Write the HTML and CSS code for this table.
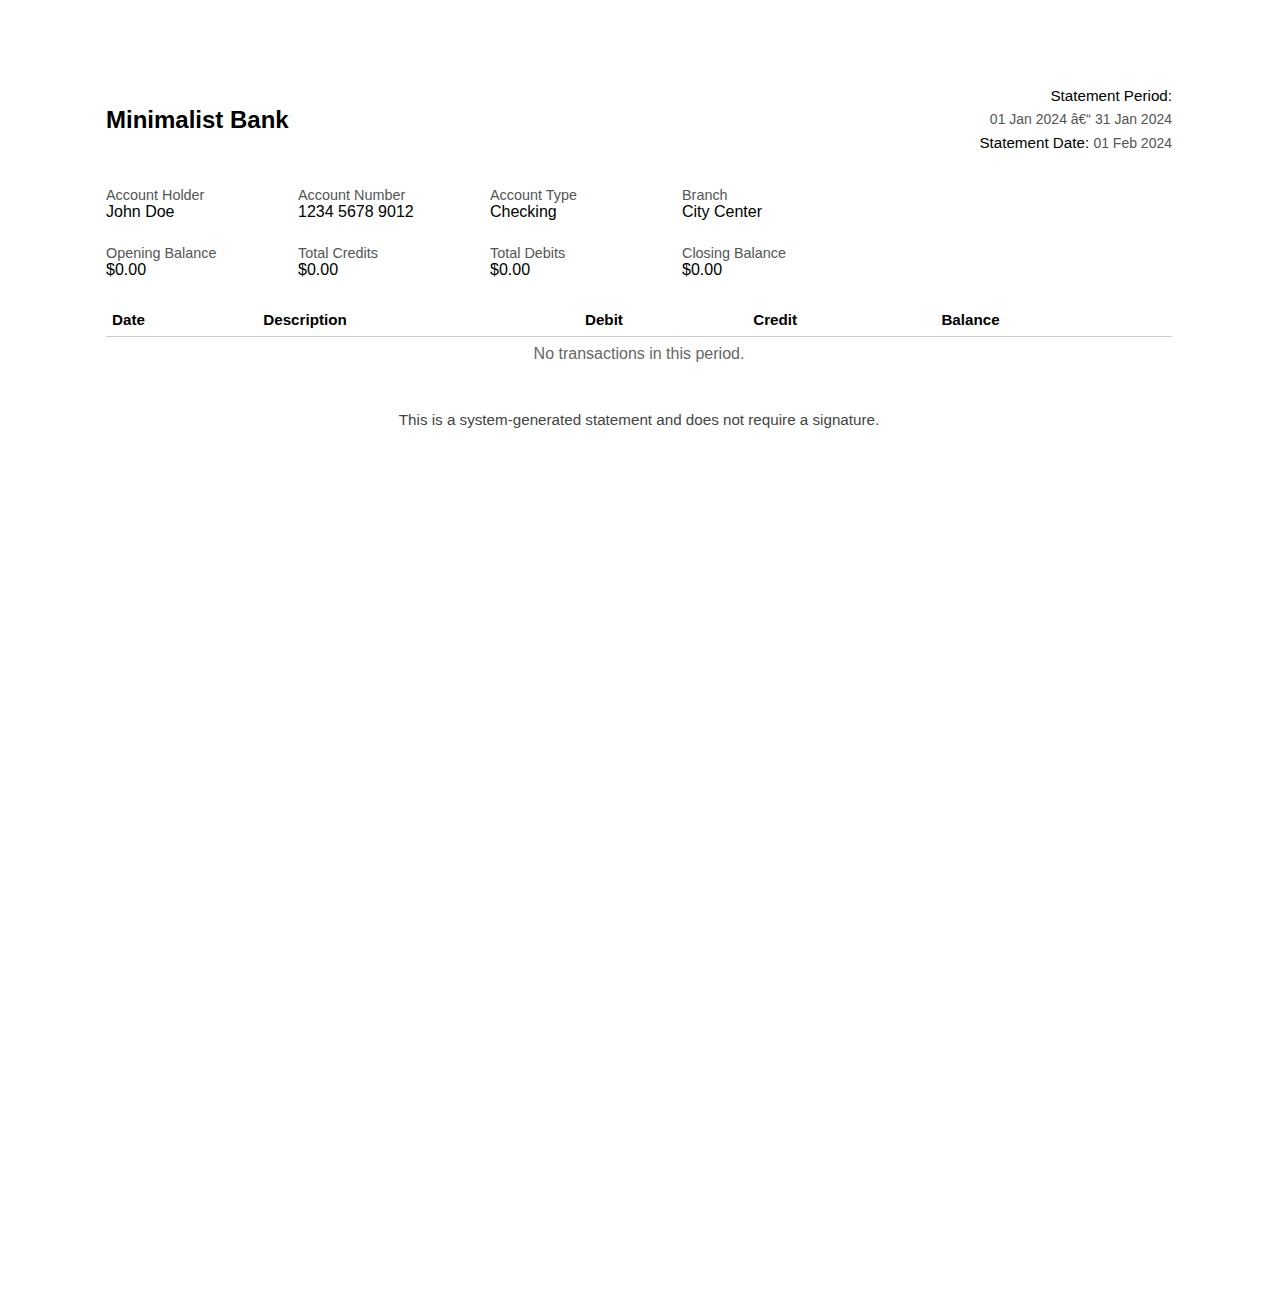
FILE: index.html
```html
<!DOCTYPE html>
<html>
<head>
<meta charset="utf-8">
<link rel="stylesheet" href="styles.css">
</head>
<body>
<div class="page">
  <header class="top">
    <h1 class="bank">Minimalist Bank</h1>
    <div class="meta">
      <div class="meta-line">Statement Period:</div>
      <div class="meta-line muted">01 Jan 2024 â€“ 31 Jan 2024</div>
      <div class="meta-line">Statement Date: <span class="muted">01 Feb 2024</span></div>
    </div>
  </header>

  <section class="info">
    <div class="item"><div class="label">Account Holder</div><div class="value">John Doe</div></div>
    <div class="item"><div class="label">Account Number</div><div class="value">1234 5678 9012</div></div>
    <div class="item"><div class="label">Account Type</div><div class="value">Checking</div></div>
    <div class="item"><div class="label">Branch</div><div class="value">City Center</div></div>
    <div class="item"><div class="label">Opening Balance</div><div class="value">$0.00</div></div>
    <div class="item"><div class="label">Total Credits</div><div class="value">$0.00</div></div>
    <div class="item"><div class="label">Total Debits</div><div class="value">$0.00</div></div>
    <div class="item"><div class="label">Closing Balance</div><div class="value">$0.00</div></div>
  </section>

  <table class="tx">
    <thead>
      <tr><th>Date</th><th>Description</th><th>Debit</th><th>Credit</th><th>Balance</th></tr>
    </thead>
    <tbody>
      <tr><td class="empty" colspan="5">No transactions in this period.</td></tr>
    </tbody>
  </table>

  <p class="footer">This is a system-generated statement and does not require a signature.</p>
</div>
</body>
</html>
```

FILE: styles.css
```css
html, body {
  margin: 0;
  padding: 0;
  background: #fff;
}
body {
  font-family: "Liberation Sans", Arial, sans-serif;
  color: #000;
}
.page {
  width: 1066px;
  margin: 0 auto;
  padding-top: 84px;
}
.top {
  display: flex;
  justify-content: space-between;
  align-items: center;
}
.bank {
  margin: 0;
  font-size: 24px;
  font-weight: bold;
}
.meta {
  text-align: right;
  font-size: 15.2px;
  line-height: 23.5px;
}
.muted {
  color: #555;
  font-size: 14px;
}
.info {
  display: grid;
  grid-template-columns: repeat(4, 192px);
  row-gap: 24px;
  margin-top: 31px;
}
.label {
  font-size: 14.4px;
  color: #555;
  line-height: 16px;
}
.value {
  font-size: 16px;
  line-height: 18px;
}
.tx {
  width: 100%;
  border-collapse: collapse;
  margin-top: 23px;
  font-size: 15.2px;
}
.tx th {
  text-align: left;
  font-weight: bold;
  line-height: 18px;
  padding: 9px 6px 7px;
  border-bottom: 1px solid #ccc;
}
.tx td.empty {
  text-align: center;
  color: #666;
  padding: 9px 6px 7px;
  font-size: 16px;
  line-height: 16px;
}
.footer {
  text-align: center;
  font-size: 15.2px;
  line-height: 18px;
  color: #444;
  margin: 42px 0 0;
}
```
